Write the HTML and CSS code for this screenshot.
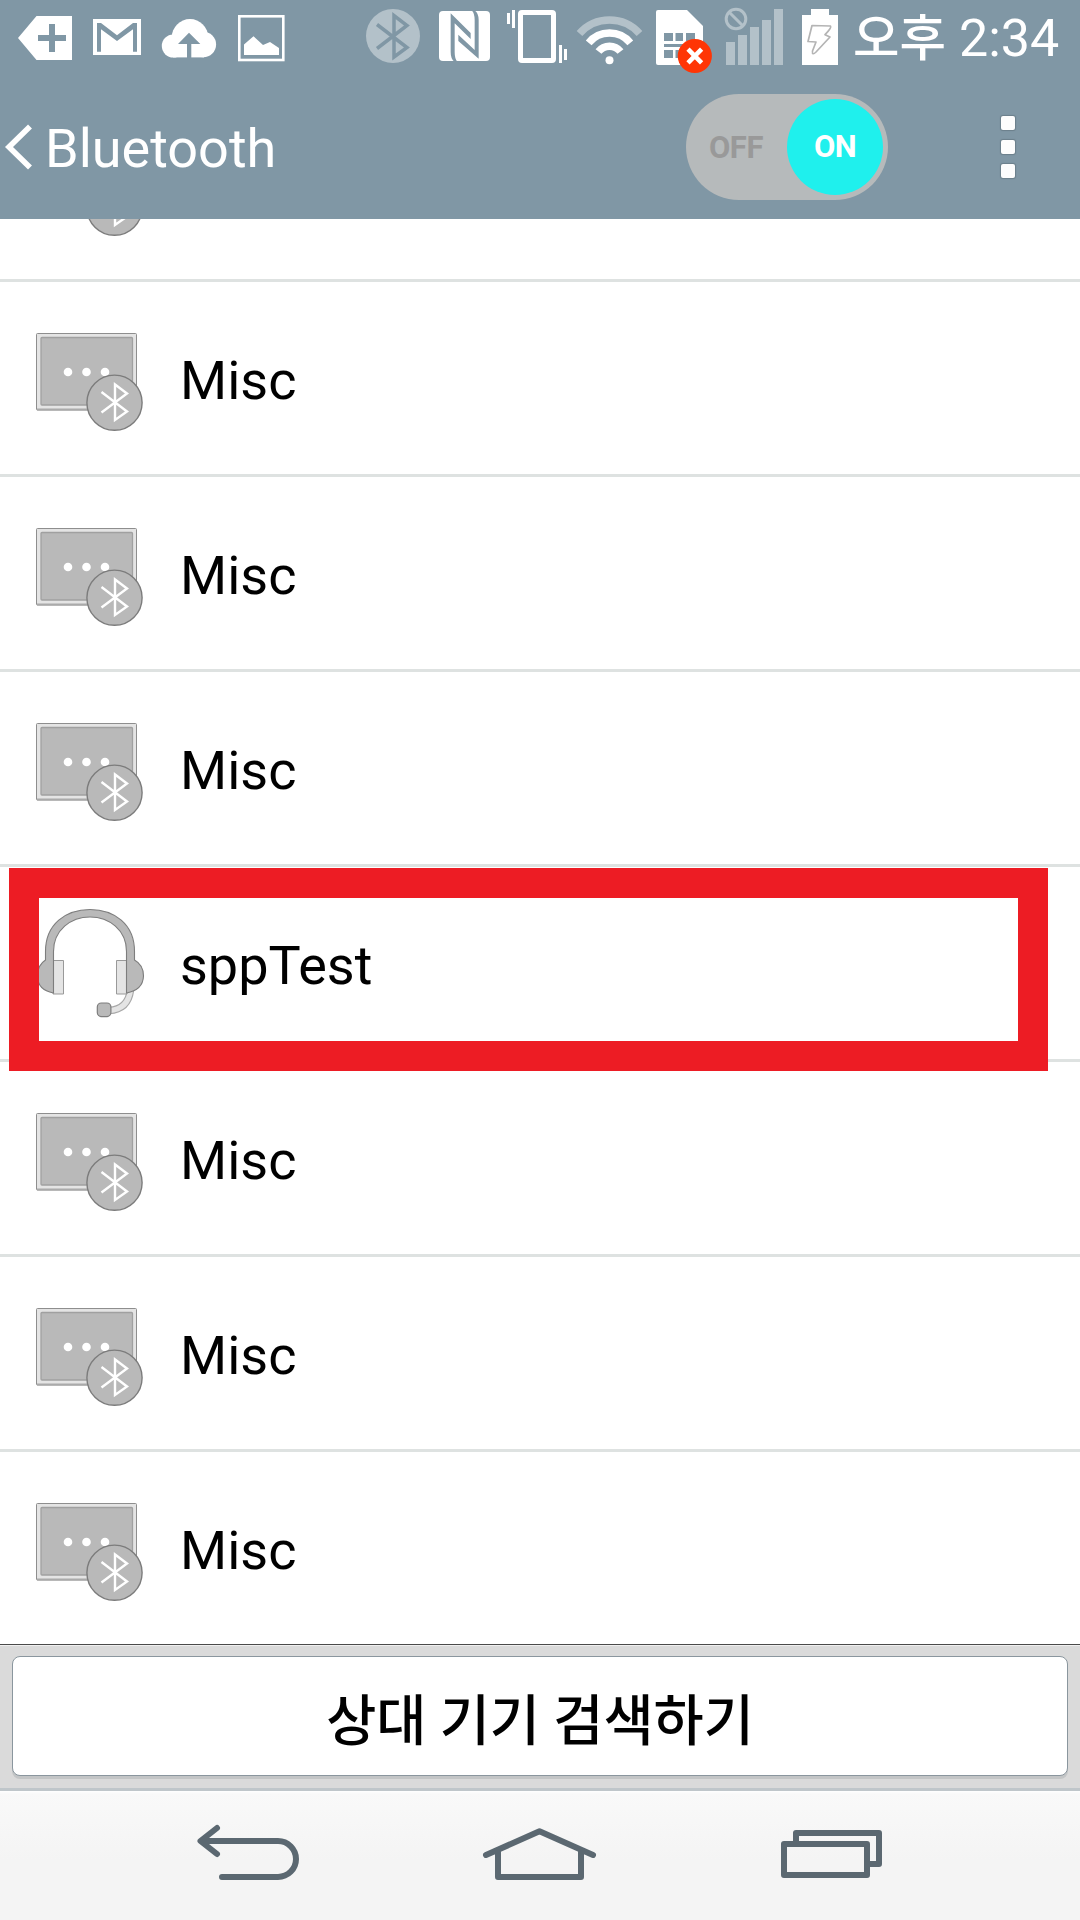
FILE: index.html
```
<!DOCTYPE html>
<html lang="ko">
<head>
<meta charset="utf-8">
<title>Bluetooth</title>
<link rel="stylesheet" href="styles.css">
</head>
<body>
<svg class="defs" aria-hidden="true">
  <symbol id="misc" viewBox="30 45 120 105">
    <rect x="36.5" y="51.5" width="100" height="76.500" rx="1" fill="#e4e4e4" stroke="#8e8e8e"/>
    <path d="M37 127.500H137" stroke="#aaa" stroke-width="2"/>
    <rect x="41" y="55.500" width="91.500" height="67.500" rx="1" fill="#b9b9b9" stroke="#a0a0a0" stroke-width="1.300"/>
    <circle cx="68" cy="90" r="4.300" fill="#fff"/><circle cx="86.500" cy="90" r="4.300" fill="#fff"/><circle cx="105" cy="90" r="4.300" fill="#fff"/>
    <circle cx="114.500" cy="120.700" r="27.600" fill="#b9b9b9" stroke="#7c7c7c" stroke-width="1.400"/>
    <path d="M101.500 110 127 129.500 115 138V102.500L127 111.500 101.500 130.500" fill="none" stroke="#fff" stroke-width="2.400"/>
  </symbol>
</svg>
<div class="screen">
  <div class="statusbar">
    <svg width="82" height="75" viewBox="0 0 82 75"><path fill="#fff" fill-rule="evenodd" d="M18 38 36.500 16H72V60H36.500ZM49 24V35H38V41H49V52H55V41H66V35H55V24Z"/></svg>
    <svg width="69" height="75" viewBox="82 0 69 75"><path fill="#fff" d="M93 19H141V55H93Z"/><path fill="#8097a5" d="M97 23H101L117 35.200 133 23H137V51.700H133V29.300L117 41 101 29.300V51.700H97Z"/></svg>
    <svg width="76" height="75" viewBox="151 0 76 75"><g fill="#fff"><circle cx="173.300" cy="46" r="11.500"/><circle cx="190" cy="37.300" r="18.200"/><circle cx="203.300" cy="44.500" r="12.800"/><path d="M173 44H204V57.400H173Z"/></g><path fill="#8097a5" d="M189 32.700 200.300 44H191.300V58H187V44H178Z"/></svg>
    <svg width="123" height="75" viewBox="227 0 123 75"><rect x="239.300" y="16.300" width="44" height="43.700" fill="none" stroke="#fff" stroke-width="2.600"/><path fill="#fff" d="M244 44.500 253.500 36.300 263 45 270 42 279 48V55H244Z"/></svg>
    <svg width="77" height="75" viewBox="350 0 77 75"><circle cx="393" cy="36" r="27" fill="#b3c1c9"/><path d="M377 24.500 407 47.500 394 57V15.500L407 25.500 377 48.500" fill="none" stroke="#8097a5" stroke-width="3.500"/></svg>
    <svg width="75" height="75" viewBox="427 0 75 75"><rect x="439" y="11" width="51" height="50" rx="4" fill="#fff"/><path transform="translate(434 6) scale(.3333)" fill="#8097a5" d="M50 22 110 81V99L62 52V138Q62 158 70 167H61Q50 159 50 138ZM134 158 73 105V86L122 132V42Q122 22 114 14H123Q134 22 134 42Z"/></svg>
    <svg width="70" height="75" viewBox="502 0 70 75"><rect x="520.500" y="12.500" width="33" height="48" rx="1.500" fill="none" stroke="#fff" stroke-width="5"/><path fill="#fff" d="M507 13h3v11h-3ZM512 10h3v18h-3ZM559 45h3v18h-3ZM564 49h3v11h-3Z"/></svg>
    <svg width="76" height="75" viewBox="572 0 76 75"><g fill="none" stroke="#fff" stroke-width="7.500"><path stroke="#b3c1c9" d="M579.500 33.500A40 40 0 0 1 639.500 33.500"/><path d="M588.700 42.800A27 27 0 0 1 630.300 42.800"/><path d="M598.500 51.500A14 14 0 0 1 620.500 51.500"/></g><circle cx="609.500" cy="60.300" r="4" fill="#fff"/></svg>
    <svg width="69" height="75" viewBox="648 0 69 75"><path fill="#fff" d="M658 10H687L703 26V65H658Q656 65 656 63V12Q656 10 658 10Z"/><path fill="#8097a5" d="M664 33h9v8h-9ZM675.500 33h7.500v8h-7.500ZM686 33h9v8h-9ZM664 44h31v3h-31ZM664 50h9v8h-9ZM675.500 50h8v8h-8Z"/><circle cx="694.800" cy="56" r="17.100" fill="#ff3505"/><path d="M688 49.200 701.600 62.800M701.600 49.200 688 62.800" stroke="#fff" stroke-width="4.600"/></svg>
    <svg width="75" height="75" viewBox="717 0 75 75"><g fill="none" stroke="#b3c1c9" stroke-width="3"><circle cx="736" cy="19" r="9.800"/><path d="M729 12 743 26"/></g><path fill="#b3c1c9" d="M726 42h9v23h-9ZM738 35h9v30h-9ZM750 27h9v38h-9ZM762 20h9v45h-9ZM774 9h9v56h-9Z"/></svg>
    <svg width="61" height="75" viewBox="792 0 61 75"><path fill="#fff" d="M811 9H829V15H838V65H802V15H811Z"/><path fill="none" stroke="#b4b4b4" stroke-width="1.700" stroke-linejoin="round" d="M812 25.500 830.500 26Q832 27.500 825 34.700L830 37 816 52Q812 56 812.500 51L816 42 808 41.500Z"/></svg>
    <div class="clock"><span class="ampm">오후</span><span class="time">2:34</span></div>
  </div>
  <header class="header">
    <svg class="back" width="45" height="144" viewBox="0 75 45 144"><path d="M30 126.500 9 147 30 167.500" fill="none" stroke="#fff" stroke-width="5.600"/></svg>
    <h1 class="title">Bluetooth</h1>
    <div class="toggle"><span class="off">OFF</span><span class="on">ON</span></div>
    <div class="menu"><i></i><i></i><i></i></div>
  </header>
  <main class="list">
    <div class="row first"><svg class="icon"><use href="#misc"/></svg></div>
    <div class="row"><svg class="icon"><use href="#misc"/></svg><span class="name">Misc</span></div>
    <div class="row"><svg class="icon"><use href="#misc"/></svg><span class="name">Misc</span></div>
    <div class="row"><svg class="icon"><use href="#misc"/></svg><span class="name">Misc</span></div>
    <div class="row marked">
      <svg class="icon headset" viewBox="30 905 120 115">
        <g fill="none" stroke-linecap="butt"><path d="M130.500 990Q128 1009.500 109 1010.500" stroke="#a8a8a8" stroke-width="7.500"/><path d="M130.500 990Q128 1009.500 109 1010.500" stroke="#e4e4e4" stroke-width="5.300"/></g>
        <path d="M53 960.500H63.500V994H53ZM116.500 960.500H127V994H116.500Z" fill="#e4e4e4" stroke="#999"/>
        <path d="M45.500 960V951.500C45.500 924 66 909.500 90 909.500S134.500 924 134.500 951.500V960Q143.500 965 143.500 976 143 990 126.500 993V951.500C126.500 930 109 917 90 917S53.500 930 53.500 951.500V993Q37.500 990 37.500 976 37.500 965 45.500 960Z" fill="#b9b9b9" stroke="#7d7d7d" stroke-width="1.100"/>
        <rect x="97.300" y="1003" width="13.600" height="13.600" rx="4" fill="#b9b9b9" stroke="#7d7d7d" stroke-width="1.200"/>
      </svg>
      <span class="name">sppTest</span>
      <div class="marker"></div>
    </div>
    <div class="row"><svg class="icon"><use href="#misc"/></svg><span class="name">Misc</span></div>
    <div class="row"><svg class="icon"><use href="#misc"/></svg><span class="name">Misc</span></div>
    <div class="row"><svg class="icon"><use href="#misc"/></svg><span class="name">Misc</span></div>
  </main>
  <div class="actions"><button class="search">상대 기기 검색하기</button></div>
  <nav class="navbar">
    <svg width="394" height="129" viewBox="0 1791 394 129"><path d="M217 1828 200.500 1841 217 1854M202 1841H278A18 18 0 0 1 278 1877H222"/></svg>
    <svg width="292" height="129" viewBox="394 1791 292 129"><path d="M486 1855 539.500 1831.300 593 1855M498 1851V1877H581V1851"/></svg>
    <svg width="394" height="129" viewBox="686 1791 394 129"><path d="M784 1844H867V1875H784ZM796 1843V1833H879V1864H868"/></svg>
  </nav>
</div>
</body>
</html>
```
FILE: styles.css
```
* { box-sizing: border-box; }

body {
  margin: 0;
  background: #fff;
  font-family: Roboto, "Noto Sans CJK KR", sans-serif;
}

svg { display: block; flex: none; }
.defs { position: absolute; width: 0; height: 0; }

.screen {
  display: flex;
  flex-direction: column;
  width: 1080px;
  height: 1920px;
  overflow: hidden;
}

.statusbar {
  display: flex;
  height: 75px;
  background: #8097a5;
  color: #fff;
}

.clock {
  display: flex;
  align-items: baseline;
  height: 75px;
  line-height: 69px;
  white-space: nowrap;
}
.ampm { width: 106px; font-size: 50.5px; font-weight: 500; font-family: "Noto Sans CJK KR", sans-serif; }
.time { font-size: 52px; }

.header {
  display: flex;
  align-items: center;
  height: 144px;
  background: #8097a5;
  color: #fff;
}

.title {
  width: 641px;
  margin: 0;
  padding-top: 4px;
  font-size: 54px;
  font-weight: 400;
  line-height: 64px;
}

.toggle {
  display: flex;
  align-items: center;
  justify-content: space-between;
  width: 202px;
  height: 106px;
  padding: 0 5px 0 23px;
  border-radius: 53px;
  background: #b6babb;
  font-size: 31px;
  font-weight: 700;
  letter-spacing: -0.5px;
}
.off { color: #999; }
.on {
  width: 96px;
  height: 96px;
  border-radius: 50%;
  background: #1ff0ed;
  line-height: 96px;
  text-align: center;
}

.menu {
  display: grid;
  gap: 10px;
  margin-left: 113px;
}
.menu i {
  width: 14px;
  height: 14px;
  border-radius: 2px;
  background: #fdfdfd;
  box-shadow: 0 0 1px 1px #6b7f8b;
}

.list {
  height: 1425px;
  overflow: hidden;
  background: #fff;
}
.row {
  display: flex;
  align-items: center;
  height: 195px;
  padding: 2px 0 0 30px;
  border-bottom: 3px solid #dee2e1;
}
.row.first { margin-top: -132px; }
.icon { width: 120px; height: 105px; }
.icon.headset { height: 115px; margin-top: -4px; }
.name {
  margin-left: 30px;
  padding-top: 3px;
  color: #000;
  font-size: 54px;
  line-height: 64px;
}

.marked { position: relative; }
.marker {
  position: absolute;
  left: 9px;
  top: 1px;
  width: 1039px;
  height: 203px;
  border: 30px solid #ed1c24;
}

.actions {
  height: 147px;
  padding: 10px 12px 0;
  border-top: 1px solid #4a4a4a;
  border-bottom: 3px solid #bfc6ca;
  background: #dadada;
  box-shadow: inset 0 1px #f0f0f0;
}
.search {
  display: block;
  width: 100%;
  height: 120px;
  margin: 1px 0 0;
  padding: 2px 0 0;
  border: 1px solid #8a969e;
  border-radius: 8px;
  background: #fff;
  box-shadow: 0 3px #c3c5c6;
  color: #000;
  font: 500 54.5px/116px "Noto Sans CJK KR", sans-serif;
  word-spacing: -2px;
}

.navbar {
  display: flex;
  height: 129px;
  background: linear-gradient(#fff 0, #f9f9f9 3px, #f4f4f4 70px);
}
.navbar path {
  fill: none;
  stroke: #5b6871;
  stroke-width: 6;
  stroke-linecap: round;
  stroke-linejoin: round;
}
```
